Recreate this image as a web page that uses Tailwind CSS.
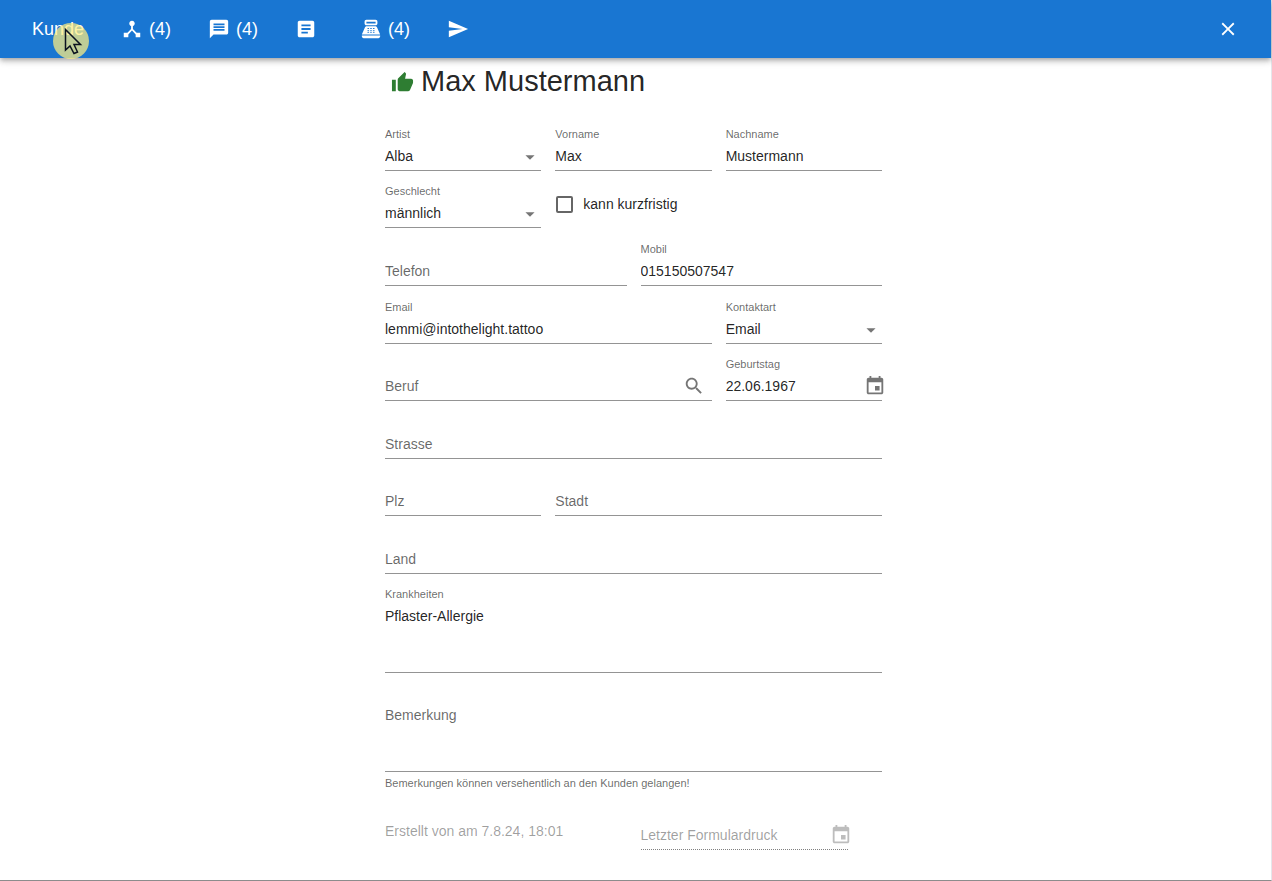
<!DOCTYPE html>
<html lang="de">
<head>
<meta charset="utf-8">
<meta name="viewport" content="width=device-width, initial-scale=1">
<title>Kunde – Max Mustermann</title>
<script src="https://cdn.jsdelivr.net/npm/@tailwindcss/browser@4"></script>
</head>
<body class="bg-white font-['Liberation_Sans',Arial,sans-serif] text-sm text-black/87">
<svg class="hidden">
  <symbol id="arrow" viewBox="0 0 24 24"><path d="M7 10l5 5 5-5z"/></symbol>
  <symbol id="event" viewBox="0 0 24 24"><path d="M17 12h-5v5h5v-5zM16 1v2H8V1H6v2H5c-1.110 0-1.990.9-1.990 2L3 19c0 1.100.89 2 2 2h14c1.100 0 2-.9 2-2V5c0-1.100-.9-2-2-2h-1V1h-2zm3 18H5V8h14v11z"/></symbol>
</svg>
<div class="flex min-h-screen flex-col border-r border-b border-r-gray-200 border-b-[#8c8c8c]">
  <header class="relative flex h-[58px] shrink-0 items-center justify-between bg-[#1976d2] pr-8 pl-8 text-lg text-white shadow-[0_2px_4px_-1px_rgba(0,0,0,0.2),0_4px_5px_0_rgba(0,0,0,0.14),0_1px_10px_0_rgba(0,0,0,0.12)]">
    <nav class="flex items-center gap-[37px]">
      <button type="button">Kunde</button>
      <button type="button" class="flex items-center gap-1.5"><svg class="size-[22px]" viewBox="0 0 24 24" fill="currentColor"><path d="M17 16l-4-4V8.820C14.160 8.400 15 7.300 15 6c0-1.660-1.340-3-3-3S9 4.340 9 6c0 1.300.84 2.400 2 2.820V12l-4 4H3v5h5v-3.050l4-4.200 4 4.200V21h5v-5h-4z"/></svg><span>(4)</span></button>
      <button type="button" class="flex items-center gap-1.5"><svg class="size-[22px]" viewBox="0 0 24 24" fill="currentColor"><path d="M20 2H4c-1.100 0-1.990.9-1.990 2L2 22l4-4h14c1.100 0 2-.9 2-2V4c0-1.100-.9-2-2-2zm-2 12H6v-2h12v2zm0-3H6V9h12v2zm0-3H6V6h12v2z"/></svg><span>(4)</span></button>
      <button type="button" class="pr-1.5" aria-label="Formulare"><svg class="size-[22px]" viewBox="0 0 24 24" fill="currentColor"><path d="M19 3H5c-1.100 0-2 .9-2 2v14c0 1.100.9 2 2 2h14c1.100 0 2-.9 2-2V5c0-1.100-.9-2-2-2zm-5 14H7v-2h7v2zm3-4H7v-2h10v2zm0-4H7V7h10v2z"/></svg></button>
      <button type="button" class="flex items-center gap-1.5"><svg class="size-[22px]" viewBox="0 0 24 24" fill="currentColor"><path d="M17 2H7c-1.100 0-2 .9-2 2v2c0 1.100.9 2 2 2h10c1.100 0 2-.9 2-2V4c0-1.100-.9-2-2-2zm0 4H7V4h10v2zm3 16H4c-1.100 0-2-.9-2-2v-1h20v1c0 1.100-.9 2-2 2zm-1.470-11.810C18.210 9.470 17.490 9 16.700 9H7.300c-.79 0-1.510.47-1.830 1.190L2 18h20l-3.470-7.810zM9.500 16h-1c-.28 0-.5-.22-.5-.5s.22-.5.5-.5h1c.28 0 .5.22.5.5s-.22.5-.5.5zm0-2h-1c-.28 0-.5-.22-.5-.5s.22-.5.5-.5h1c.28 0 .5.22.5.5s-.22.5-.5.5zm0-2h-1c-.28 0-.5-.22-.5-.5s.22-.5.5-.5h1c.28 0 .5.22.5.5s-.22.5-.5.5zm3 4h-1c-.28 0-.5-.22-.5-.5s.22-.5.5-.5h1c.28 0 .5.22.5.5s-.22.5-.5.5zm0-2h-1c-.28 0-.5-.22-.5-.5s.22-.5.5-.5h1c.28 0 .5.22.5.5s-.22.5-.5.5zm0-2h-1c-.28 0-.5-.22-.5-.5s.22-.5.5-.5h1c.28 0 .5.22.5.5s-.22.5-.5.5zm3 4h-1c-.28 0-.5-.22-.5-.5s.22-.5.5-.5h1c.28 0 .5.22.5.5s-.22.5-.5.5zm0-2h-1c-.28 0-.5-.22-.5-.5s.22-.5.5-.5h1c.28 0 .5.22.5.5s-.22.5-.5.5zm0-2h-1c-.28 0-.5-.22-.5-.5s.22-.5.5-.5h1c.28 0 .5.22.5.5s-.22.5-.5.5z"/></svg><span>(4)</span></button>
      <button type="button" aria-label="Senden"><svg class="size-[22px]" viewBox="0 0 24 24" fill="currentColor"><path d="M2.010 21L23 12 2.010 3 2 10l15 2-15 2z"/></svg></button>
    </nav>
    <button type="button" aria-label="Schließen"><svg class="size-[22px]" viewBox="0 0 24 24" fill="currentColor"><path d="M19 6.410L17.590 5 12 10.590 6.410 5 5 6.410 10.590 12 5 17.590 6.410 19 12 13.410 17.590 19 19 17.590 13.410 12z"/></svg></button>
    <!-- mouse pointer with highlight -->
    <svg class="pointer-events-none absolute top-[22px] left-[52px] h-[38px] w-[38px]" viewBox="0 0 38 38"><circle cx="19" cy="19" r="18" fill="#ffee80" fill-opacity=".72"/><path d="M13.500 7.500v20.500l4.500-4 4 7.500 3.500-1.500-3.500-7.500h6.500z" fill="none" stroke="#0b1220" stroke-width="1.500"/></svg>
  </header>

  <main class="pr-1">
    <form class="mx-auto max-w-[497px]">
      <h1 class="mb-[7px] flex h-12 items-center gap-[7px] pl-1.5 text-[29px]"><svg class="size-[23px] fill-[#2e7d32]" viewBox="0 0 24 24"><path d="M1 21h4V9H1v12zm22-11c0-1.100-.9-2-2-2h-6.310l.95-4.570.03-.32c0-.41-.17-.79-.44-1.060L14.170 1 7.590 7.590C7.220 7.950 7 8.450 7 9v10c0 1.100.9 2 2 2h9c.83 0 1.540-.5 1.840-1.220l3.020-7.050c.09-.23.14-.47.14-.73v-2z"/></svg>Max Mustermann</h1>

      <div class="grid min-h-[461px] auto-rows-fr grid-cols-12 items-end gap-x-3.5">
        <div class="relative col-span-4 flex flex-col">
          <label for="artist" class="mb-px text-[11px] leading-[14px] text-black/60">Artist</label>
          <select id="artist" class="h-[29px] w-full appearance-none border-b border-[#949494] bg-transparent"><option>Alba</option></select>
          <svg class="pointer-events-none absolute right-0 bottom-[3px] size-[22px] fill-black/54"><use href="#arrow"/></svg>
        </div>
        <div class="col-span-4 flex flex-col">
          <label for="vorname" class="mb-px text-[11px] leading-[14px] text-black/60">Vorname</label>
          <input id="vorname" value="Max" class="h-[29px] w-full border-b border-[#949494] outline-none">
        </div>
        <div class="col-span-4 flex flex-col">
          <label for="nachname" class="mb-px text-[11px] leading-[14px] text-black/60">Nachname</label>
          <input id="nachname" value="Mustermann" class="h-[29px] w-full border-b border-[#949494] outline-none">
        </div>

        <div class="relative col-span-4 flex flex-col">
          <label for="geschlecht" class="mb-px text-[11px] leading-[14px] text-black/60">Geschlecht</label>
          <select id="geschlecht" class="h-[29px] w-full appearance-none border-b border-[#949494] bg-transparent"><option>männlich</option></select>
          <svg class="pointer-events-none absolute right-0 bottom-[3px] size-[22px] fill-black/54"><use href="#arrow"/></svg>
        </div>
        <label class="col-span-8 flex h-[44px] items-center gap-2.5 pb-1 pl-px"><input type="checkbox" class="size-[17px] appearance-none rounded-xs border-2 border-black/60">kann kurzfristig</label>

        <div class="col-span-6">
          <input aria-label="Telefon" placeholder="Telefon" class="h-[29px] w-full border-b border-[#949494] outline-none placeholder:text-black/60">
        </div>
        <div class="col-span-6 flex flex-col">
          <label for="mobil" class="mb-px text-[11px] leading-[14px] text-black/60">Mobil</label>
          <input id="mobil" value="015150507547" class="h-[29px] w-full border-b border-[#949494] outline-none">
        </div>

        <div class="col-span-8 flex flex-col">
          <label for="email" class="mb-px text-[11px] leading-[14px] text-black/60">Email</label>
          <input id="email" value="lemmi@intothelight.tattoo" class="h-[29px] w-full border-b border-[#949494] outline-none">
        </div>
        <div class="relative col-span-4 flex flex-col">
          <label for="kontaktart" class="mb-px text-[11px] leading-[14px] text-black/60">Kontaktart</label>
          <select id="kontaktart" class="h-[29px] w-full appearance-none border-b border-[#949494] bg-transparent"><option>Email</option></select>
          <svg class="pointer-events-none absolute right-0 bottom-[3px] size-[22px] fill-black/54"><use href="#arrow"/></svg>
        </div>

        <div class="col-span-8 flex h-[29px] items-center border-b border-[#949494] pr-[7px]">
          <input aria-label="Beruf" placeholder="Beruf" class="h-full min-w-0 flex-1 outline-none placeholder:text-black/60">
          <button type="button" aria-label="Beruf suchen"><svg class="size-[22px] fill-black/54" viewBox="0 0 24 24"><path d="M15.500 14h-.79l-.28-.27C15.410 12.590 16 11.110 16 9.500 16 5.910 13.090 3 9.500 3S3 5.910 3 9.500 5.910 16 9.500 16c1.610 0 3.090-.59 4.230-1.570l.27.28v.79l5 4.990L20.490 19l-4.990-5zm-6 0C7.010 14 5 11.990 5 9.500S7.010 5 9.500 5 14 7.010 14 9.500 11.990 14 9.500 14z"/></svg></button>
        </div>
        <div class="relative col-span-4 flex flex-col">
          <label for="geburtstag" class="mb-px text-[11px] leading-[14px] text-black/60">Geburtstag</label>
          <input id="geburtstag" value="22.06.1967" class="h-[29px] w-full border-b border-[#949494] outline-none">
          <button type="button" aria-label="Datum wählen" class="absolute -right-1 bottom-1"><svg class="size-[22px] fill-black/54"><use href="#event"/></svg></button>
        </div>

        <div class="col-span-12"><input aria-label="Strasse" placeholder="Strasse" class="h-[29px] w-full border-b border-[#949494] outline-none placeholder:text-black/60"></div>

        <div class="col-span-4"><input aria-label="Plz" placeholder="Plz" class="h-[29px] w-full border-b border-[#949494] outline-none placeholder:text-black/60"></div>
        <div class="col-span-8"><input aria-label="Stadt" placeholder="Stadt" class="h-[29px] w-full border-b border-[#949494] outline-none placeholder:text-black/60"></div>

        <div class="col-span-12"><input aria-label="Land" placeholder="Land" class="h-[29px] w-full border-b border-[#949494] outline-none placeholder:text-black/60"></div>
      </div>

      <div class="mt-[13px] flex flex-col">
        <label for="krankheiten" class="mb-px text-[11px] leading-[14px] text-black/60">Krankheiten</label>
        <textarea id="krankheiten" class="h-[71px] w-full resize-none border-b border-[#949494] pt-1 leading-5 outline-none">Pflaster-Allergie</textarea>
      </div>
      <div class="mt-7 flex flex-col">
        <textarea aria-label="Bemerkung" aria-describedby="hinweis" placeholder="Bemerkung" class="h-[71px] w-full resize-none border-b border-[#949494] pt-1 leading-5 outline-none placeholder:text-black/60"></textarea>
        <p id="hinweis" class="mt-1 text-[11px] leading-[14px] text-black/60">Bemerkungen können versehentlich an den Kunden gelangen!</p>
      </div>

      <div class="mt-[31px] grid grid-cols-2 items-start gap-x-3.5 text-black/38">
        <p>Erstellt von am 7.8.24, 18:01</p>
        <div class="relative mr-[34px]">
          <input disabled aria-label="Letzter Formulardruck" placeholder="Letzter Formulardruck" class="h-[29px] w-full border-b border-dotted border-[#808080] placeholder:text-black/38">
          <button type="button" disabled aria-label="Datum wählen" class="absolute -right-1 bottom-1"><svg class="size-[22px] fill-black/26"><use href="#event"/></svg></button>
        </div>
      </div>
    </form>
  </main>
</div>
</body>
</html>
